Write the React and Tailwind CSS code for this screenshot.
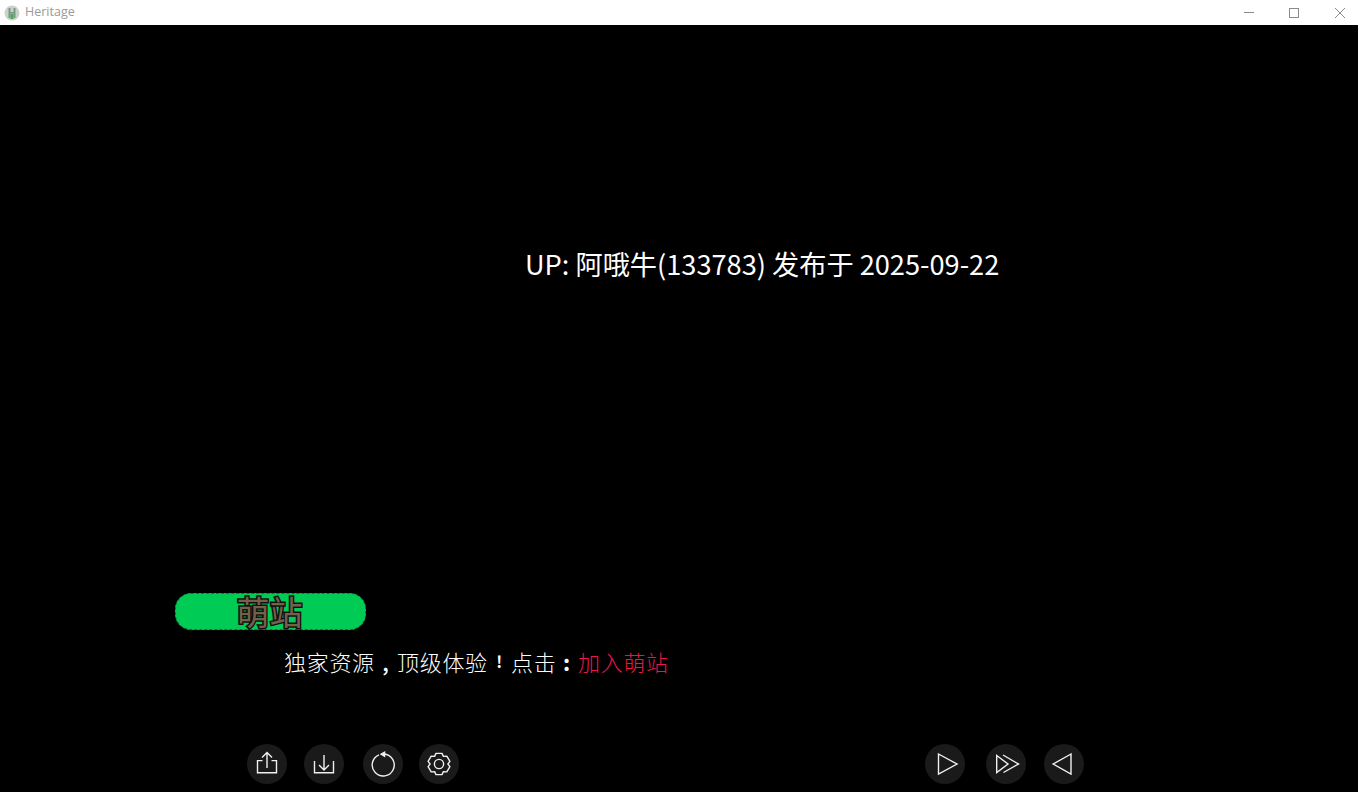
const cjk = "font-['Noto_Sans_CJK_SC','Noto_Sans',sans-serif]";

function Circle({ className = "", children }) {
  return (
    <div className={`flex h-10 w-10 shrink-0 items-center justify-center rounded-full bg-[#1a1a1a] ${className}`}>
      <svg className="overflow-visible" width="24" height="24" viewBox="0 0 24 24" fill="none" stroke="#f0f0f0" strokeWidth="1.4">
        {children}
      </svg>
    </div>
  );
}

export default function App() {
  return (
    <div className={`flex h-[792px] w-[1358px] flex-col overflow-hidden bg-black ${cjk}`}>
      <header className="flex h-[25px] shrink-0 items-center bg-white">
        <svg className="ml-[4px]" width="16" height="16" viewBox="0 0 16 16">
          <circle cx="8" cy="8" r="7.5" fill="#c9d2cb" />
          <rect x="4.5" y="3" width="2" height="10" fill="#7e9686" />
          <rect x="9.5" y="3" width="2" height="10" fill="#7e9686" />
          <rect x="5" y="7" width="6" height="1.6" fill="#7e9686" />
          <rect x="6.5" y="9" width="3" height="5" fill="#46ab54" />
        </svg>
        <span className="ml-[5px] font-['Open_Sans',sans-serif] text-[12.5px] text-[#9a9a9a]">Heritage</span>
        <div className="ml-auto flex items-center text-[#8a8a8a]">
          <div className="mr-[35px] h-px w-[10px] bg-[#8a8a8a]" />
          <div className="mr-[35px] h-[10px] w-[10px] border border-[#8a8a8a]" />
          <svg className="mr-[12px]" width="12" height="12" viewBox="0 0 12 12" stroke="#8a8a8a" strokeWidth="1">
            <path d="M1 1 L11 11 M11 1 L1 11" />
          </svg>
        </div>
      </header>

      <main className="relative flex min-h-0 flex-1 flex-col">
        <p className="ml-[525px] mt-[219px] whitespace-nowrap text-[27.2px] leading-[38px] text-white">
          UP: 阿哦牛(133783) 发布于 2025-09-22
        </p>

        <div className="ml-[175px] mt-[311px] flex h-[37px] w-[191px] items-center justify-center rounded-[16px] border border-dashed border-[#067a36] bg-[#00cc55]">
          <span className="-translate-x-px -translate-y-px text-[33px] leading-9 text-[#75604c] [-webkit-text-stroke:3px_#111] [paint-order:stroke_fill]">萌站</span>
        </div>

        <p className="ml-[284px] mt-[16px] flex h-[30px] items-center whitespace-nowrap text-[22px] font-light leading-[30px] tracking-[0.7px] text-white">
          <span className="w-[91px]">独家资源</span>
          <span className="w-[22px] text-center font-medium">,</span>
          <span className="w-[91px]">顶级体验</span>
          <span className="w-[23px] text-center text-[16px] font-bold">!</span>
          <span className="w-[45px]">点击</span>
          <span className="w-[22px] text-center font-bold">:</span>
          <span className="text-[#e8164a]">加入萌站</span>
        </p>

        <div className="mt-[68px] flex items-center">
          <Circle className="ml-[247px]">
            <path d="M12 16 V0.8 M7 5.5 L12 0.5 L17 5.5" />
            <path d="M7.5 8.6 H2.5 V20.8 H21.5 V8.6 H16.5" />
          </Circle>
          <Circle className="ml-[17px]">
            <path d="M12 3 V18 M7 13 L12 18 L17 13" />
            <path d="M2.5 9 V20.8 H21.5 V9" />
          </Circle>
          <Circle className="ml-[19px]">
            <path d="M13 2 A11 11 0 1 1 8 2.8" />
            <path d="M10.2 2.2 L13.6 0.2 L13.6 4.2 Z" fill="#f0f0f0" />
          </Circle>
          <Circle className="ml-[16px]">
            <circle cx="12" cy="12" r="4.6" />
            <path d="M9 1.4 H15 L16.4 4.4 L19.8 4.1 L22.9 9.4 L20.9 12 L22.9 14.6 L19.8 19.9 L16.4 19.6 L15 22.6 H9 L7.6 19.6 L4.2 19.9 L1.1 14.6 L3.1 12 L1.1 9.4 L4.2 4.1 L7.6 4.4 Z" strokeLinejoin="round" />
          </Circle>

          <Circle className="ml-[466px]">
            <path d="M5.5 2 L24 12 L5.5 22 Z" />
          </Circle>
          <Circle className="ml-[21px]">
            <path d="M2.7 3.5 L14 12 L2.7 20.5 Z" />
            <path d="M9 3 L24.5 12 L9.5 20.5" />
          </Circle>
          <Circle className="ml-[18px]">
            <path d="M19 2 L1.2 12 L19 22 Z" />
          </Circle>
        </div>
      </main>
    </div>
  );
}
